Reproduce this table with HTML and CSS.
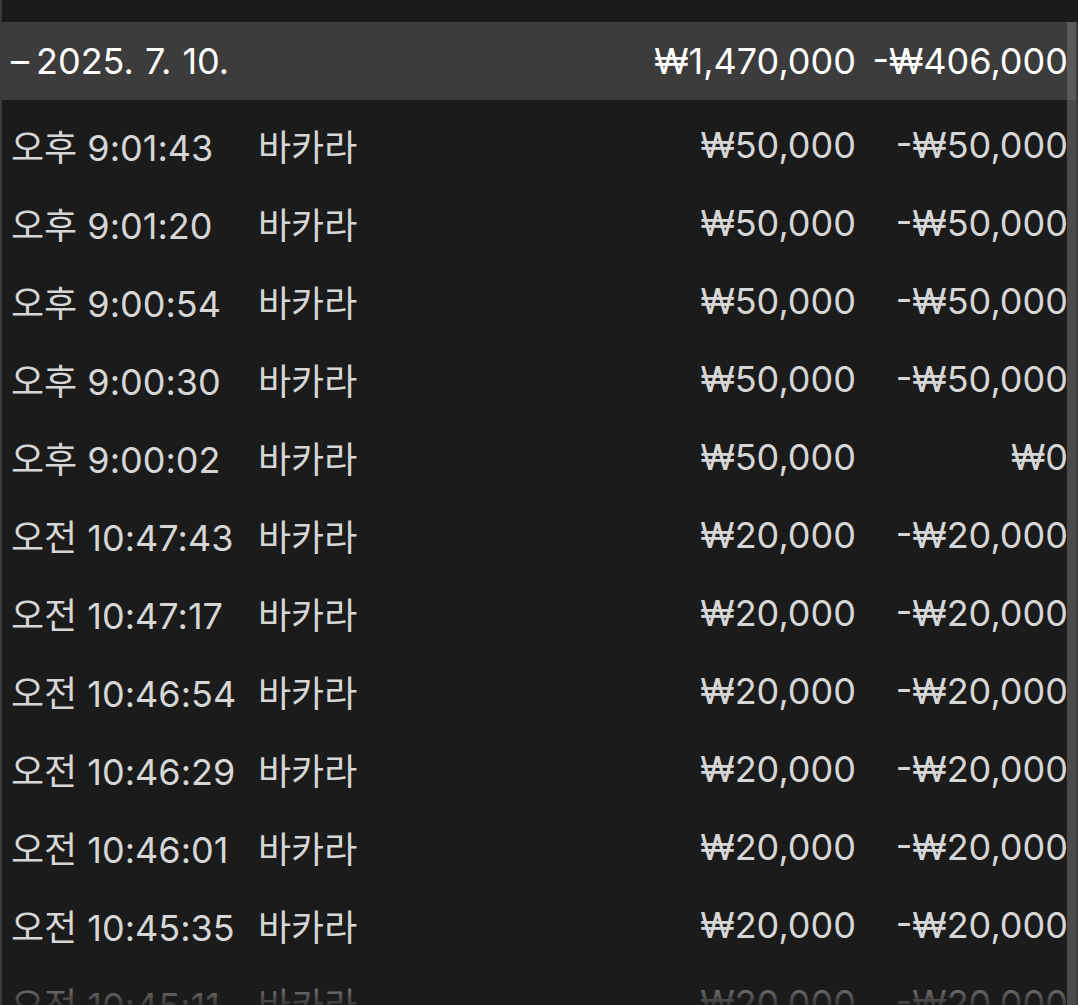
FILE: index.html
```html
<!DOCTYPE html>
<html lang="ko">
<head>
<meta charset="utf-8">
<link rel="stylesheet" href="styles.css">
</head>
<body>
<div class="panel">
  <div class="topbar"></div>
  <div class="scroller">
    <div class="table">
      <div class="group-row">
        <span class="c-date"><span class="toggle">–</span>2025. 7. 10.</span>
        <span class="c-amt">₩1,470,000</span>
        <span class="c-res">-₩406,000</span>
      </div>
      <div class="rows">
        <div class="row"><span class="c-time">오후 9:01:43</span><span class="c-game">바카라</span><span class="c-amt">₩50,000</span><span class="c-res">-₩50,000</span></div>
        <div class="row"><span class="c-time">오후 9:01:20</span><span class="c-game">바카라</span><span class="c-amt">₩50,000</span><span class="c-res">-₩50,000</span></div>
        <div class="row"><span class="c-time">오후 9:00:54</span><span class="c-game">바카라</span><span class="c-amt">₩50,000</span><span class="c-res">-₩50,000</span></div>
        <div class="row"><span class="c-time">오후 9:00:30</span><span class="c-game">바카라</span><span class="c-amt">₩50,000</span><span class="c-res">-₩50,000</span></div>
        <div class="row"><span class="c-time">오후 9:00:02</span><span class="c-game">바카라</span><span class="c-amt">₩50,000</span><span class="c-res">₩0</span></div>
        <div class="row"><span class="c-time">오전 10:47:43</span><span class="c-game">바카라</span><span class="c-amt">₩20,000</span><span class="c-res">-₩20,000</span></div>
        <div class="row"><span class="c-time">오전 10:47:17</span><span class="c-game">바카라</span><span class="c-amt">₩20,000</span><span class="c-res">-₩20,000</span></div>
        <div class="row"><span class="c-time">오전 10:46:54</span><span class="c-game">바카라</span><span class="c-amt">₩20,000</span><span class="c-res">-₩20,000</span></div>
        <div class="row"><span class="c-time">오전 10:46:29</span><span class="c-game">바카라</span><span class="c-amt">₩20,000</span><span class="c-res">-₩20,000</span></div>
        <div class="row"><span class="c-time">오전 10:46:01</span><span class="c-game">바카라</span><span class="c-amt">₩20,000</span><span class="c-res">-₩20,000</span></div>
        <div class="row"><span class="c-time">오전 10:45:35</span><span class="c-game">바카라</span><span class="c-amt">₩20,000</span><span class="c-res">-₩20,000</span></div>
        <div class="row"><span class="c-time">오전 10:45:11</span><span class="c-game">바카라</span><span class="c-amt">₩20,000</span><span class="c-res">-₩20,000</span></div>
      </div>
    </div>
    <div class="scrollbar"><div class="thumb"></div></div>
  </div>
  <div class="fade"></div>
</div>
</body>
</html>
```

FILE: styles.css
```css
html, body {
  margin: 0;
  padding: 0;
  background: #1b1b1b;
  height: 100%;
  overflow: hidden;
}
body {
  font-family: Inter, "Noto Sans CJK KR", sans-serif;
  font-size: 36px;
  color: #d6d6d6;
}
.panel {
  position: relative;
  height: 1005px;
  border-left: 2px solid #3a3a3a;
  box-sizing: border-box;
  display: flex;
  flex-direction: column;
  overflow: hidden;
}
.topbar {
  height: 22px;
  flex: none;
}
.scroller {
  display: flex;
  flex: 1;
  min-height: 0;
}
.table {
  flex: 1;
  min-width: 0;
}
.group-row, .row {
  display: flex;
  align-items: center;
  height: 78px;
  padding-left: 9px;
  white-space: nowrap;
}
.group-row {
  background: #3c3c3c;
  color: #ffffff;
}
.rows {
  padding-top: 6px;
}
.toggle {
  display: inline-block;
  width: 25px;
}
.c-date {
  flex: 1;
  word-spacing: 1px;
}
.c-time {
  width: 247px;
  flex: none;
}
.c-game {
  flex: 1;
}
.c-amt {
  width: 210px;
  text-align: right;
  flex: none;
}
.c-res {
  width: 212px;
  margin-right: -1px;
  text-align: right;
  flex: none;
}
.scrollbar {
  width: 11px;
  flex: none;
  background: #4a4a4a;
  border-right: 2px solid #3a3a3a;
  box-sizing: border-box;
  position: relative;
}
.thumb {
  height: 78px;
  background: #5a5a5a;
}
.fade {
  position: absolute;
  left: 0;
  right: 11px;
  bottom: 0;
  height: 30px;
  background: linear-gradient(to bottom, rgba(27,27,27,0.3), rgba(27,27,27,0.85));
}
```
